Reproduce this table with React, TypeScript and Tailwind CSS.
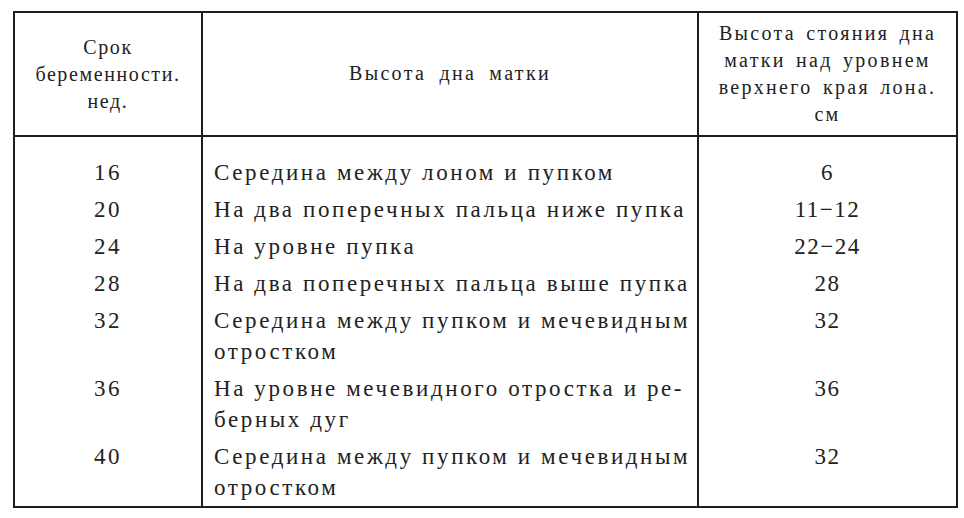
const rows: { week: string; lines: string[]; cm: string }[] = [
  { week: "16", lines: ["Середина между лоном и пупком"], cm: "6" },
  { week: "20", lines: ["На два поперечных пальца ниже пупка"], cm: "11−12" },
  { week: "24", lines: ["На уровне пупка"], cm: "22−24" },
  { week: "28", lines: ["На два поперечных пальца выше пупка"], cm: "28" },
  { week: "32", lines: ["Середина между пупком и мечевидным", "отростком"], cm: "32" },
  { week: "36", lines: ["На уровне мечевидного отростка и ре-", "берных дуг"], cm: "36" },
  { week: "40", lines: ["Середина между пупком и мечевидным", "отростком"], cm: "32" },
];

export default function App() {
  return (
    <div className="w-[964px] h-[518px] bg-white pt-[11px] pl-[13px] text-[#222] font-['Liberation_Serif',serif]">
      <table className="table-fixed border-collapse w-[943px] border-2 border-[#1e1e1e]">
        <colgroup>
          <col className="w-[188px]" />
          <col className="w-[496px]" />
          <col className="w-[259px]" />
        </colgroup>
        <thead>
          <tr className="h-[124px] text-[20px] leading-[27px] tracking-[2.3px] [word-spacing:3px] text-center">
            <th className="font-normal border-r-2 border-b-2 border-[#1e1e1e] align-middle tracking-[1.6px]">
              Срок
              <br />
              беременности.
              <br />
              нед.
            </th>
            <th className="font-normal border-r-2 border-b-2 border-[#1e1e1e] align-middle pb-[2px] [word-spacing:6px]">
              Высота дна матки
            </th>
            <th className="font-normal border-b-2 border-[#1e1e1e] align-middle whitespace-nowrap">
              Высота стояния дна
              <br />
              матки над уровнем
              <br />
              верхнего края лона.
              <br />
              см
            </th>
          </tr>
        </thead>
        <tbody className="text-[23px] leading-[31px] tracking-[2.6px]">
          {rows.map((r, i) => {
            const pad = `${i === 0 ? "pt-[20px]" : ""} ${i === rows.length - 1 ? "pb-[3px]" : "pb-[6px]"}`;
            return (
              <tr key={r.week}>
                <td className={`text-center align-top border-r-2 border-[#1e1e1e] ${pad}`}>{r.week}</td>
                <td className={`align-top border-r-2 border-[#1e1e1e] pl-[11px] whitespace-nowrap ${pad}`}>
                  {r.lines.map((l) => (
                    <div key={l}>{l}</div>
                  ))}
                </td>
                <td className={`text-center align-top tracking-[1.5px] ${pad}`}>{r.cm}</td>
              </tr>
            );
          })}
        </tbody>
      </table>
    </div>
  );
}
